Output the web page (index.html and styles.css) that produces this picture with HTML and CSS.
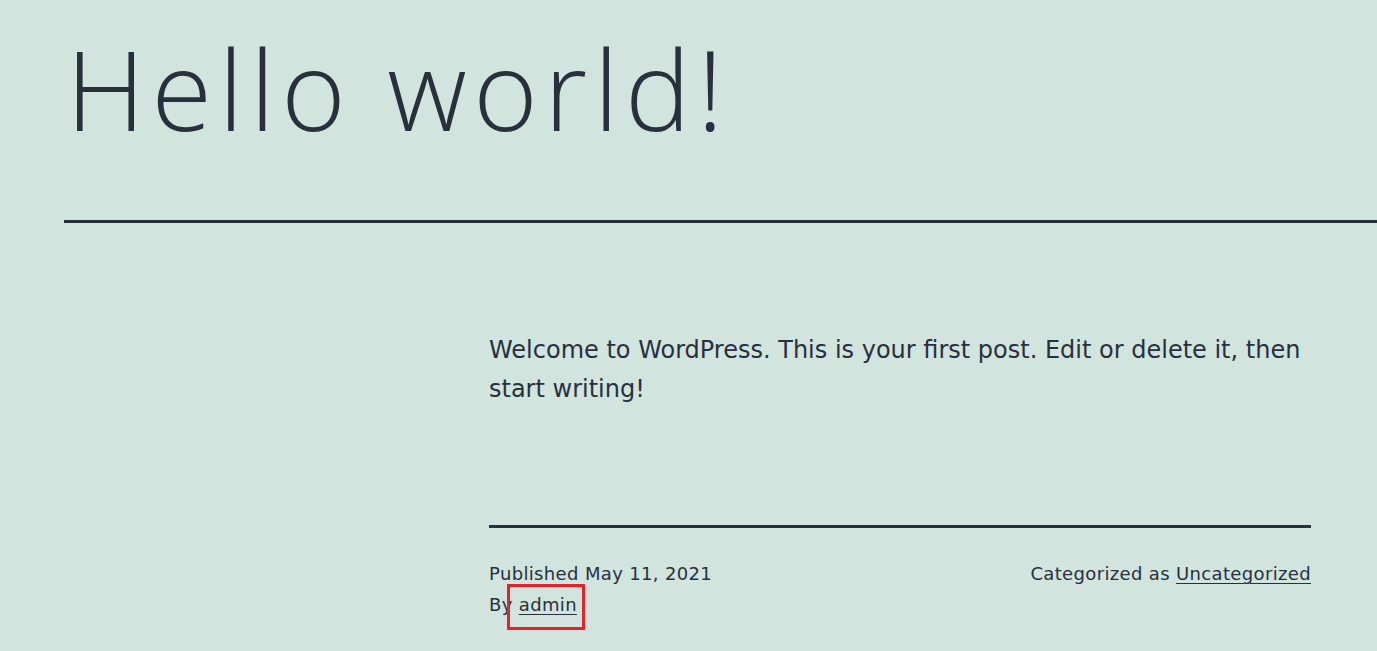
FILE: index.html
```html
<!DOCTYPE html>
<html lang="en">
<head>
<meta charset="utf-8">
<title>Hello world!</title>
<link rel="stylesheet" href="styles.css">
</head>
<body>
<article class="post">
  <header class="entry-header">
    <h1 class="entry-title">Hello world!</h1>
  </header>
  <hr class="sep sep-wide">
  <div class="entry-content">
    <p>Welcome to WordPress. This is your first post. Edit or delete it, then start writing!</p>
  </div>
  <footer class="entry-footer">
    <hr class="sep">
    <div class="meta">
      <div class="meta-left">
        <div>Published May 11, 2021</div>
        <div>By <span class="mark"><a href="#">admin</a></span></div>
      </div>
      <div class="meta-right">Categorized as <a href="#">Uncategorized</a></div>
    </div>
  </footer>
</article>
</body>
</html>
```

FILE: styles.css
```css
html, body {
  margin: 0;
  padding: 0;
}
body {
  background: #d1e4dd;
  color: #28303d;
  font-family: "DejaVu Sans", sans-serif;
}
.post {
  padding-left: 64px;
  padding-bottom: 20px;
}
.entry-title {
  margin: 0;
  padding-top: 28px;
  padding-left: 2px;
  font-family: "Open Sans", sans-serif;
  font-weight: 300;
  font-size: 110px;
  line-height: 120px;
  letter-spacing: 6.5px;
}
.sep {
  border: 0;
  height: 3px;
  background: #28303d;
  margin: 0;
}
.sep-wide {
  margin-top: 72px;
}
.entry-content {
  margin-left: 425px;
  width: 822px;
  padding-top: 108px;
}
.entry-content p {
  margin: 0;
  font-size: 24px;
  line-height: 39px;
}
.entry-footer {
  margin-left: 425px;
  width: 822px;
  padding-top: 116px;
}
.meta {
  display: flex;
  justify-content: space-between;
  align-items: flex-start;
  padding-top: 30px;
  font-size: 18px;
  line-height: 31px;
  letter-spacing: 0.35px;
}
.meta a {
  color: #28303d;
  text-decoration: underline;
  text-underline-offset: 3px;
  text-decoration-thickness: 1px;
}
.mark {
  position: relative;
  display: inline-block;
}
.mark::after {
  content: "";
  position: absolute;
  top: -5px;
  bottom: -10px;
  left: -12px;
  right: -8px;
  border: 3px solid #e8202a;
  pointer-events: none;
}
```
